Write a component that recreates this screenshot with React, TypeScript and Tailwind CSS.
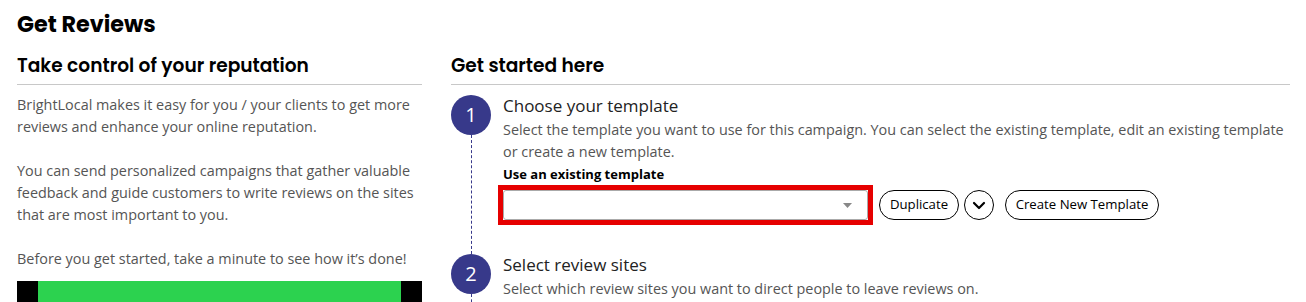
import React from "react";

const heading = "font-['Poppins','Inter',sans-serif]";
const body = "font-['Open_Sans',sans-serif]";

const Step = ({
  num,
  title,
  desc,
  children,
}: {
  num: number;
  title: string;
  desc: React.ReactNode;
  children?: React.ReactNode;
}) => (
  <div className="flex gap-3">
    <div className="flex w-10 shrink-0 flex-col items-center">
      <div className="flex h-10 w-10 items-center justify-center rounded-full bg-[#37398a] text-[20px] text-white">
        {num}
      </div>
      <div className="w-0 flex-1 border-l border-dashed border-[#37398a]" />
    </div>
    <div className="flex-1 pb-[29px]">
      <div className="text-[17px] leading-[22px] text-[#222]">{title}</div>
      <div className="mt-0.5 text-[14.4px] leading-[22px] text-[#555]">{desc}</div>
      {children}
    </div>
  </div>
);

export default function App() {
  return (
    <div className={`${body} h-[302px] overflow-hidden bg-white pl-[17px] pr-[16px] pt-[11px]`}>
      <h1 className={`${heading} text-[22.3px] font-bold leading-[28px] text-black`}>Get Reviews</h1>
      <div className="mt-[15px] flex gap-[29px]">
        <div className="w-[405px] shrink-0">
          <h2 className={`${heading} border-b border-[#c8c8c8] pb-[6px] text-[18.6px] font-semibold leading-[24px] text-black`}>
            Take control of your reputation
          </h2>
          <div className="mt-[9px] text-[14.4px] leading-[22px] text-[#555]">
            <p>BrightLocal makes it easy for you / your clients to get more reviews and enhance your online reputation.</p>
            <p className="mt-[22px]">
              You can send personalized campaigns that gather valuable feedback and guide customers to write reviews on the sites that are most important to you.
            </p>
            <p className="mt-[22px]">Before you get started, take a minute to see how it’s done!</p>
          </div>
          <div className="mt-[11px] flex h-[200px] bg-black px-[21px]">
            <div className="flex-1 bg-[#2cd24f]" />
          </div>
        </div>
        <div className="flex-1">
          <h2 className={`${heading} border-b border-[#c8c8c8] pb-[6px] text-[18.6px] font-semibold leading-[24px] text-black`}>
            Get started here
          </h2>
          <div className="mt-[10px]">
            <Step
              num={1}
              title="Choose your template"
              desc="Select the template you want to use for this campaign. You can select the existing template, edit an existing template or create a new template."
            >
              <div className="mt-[2px] text-[13px] font-bold leading-[18px] text-black">Use an existing template</div>
              <div className="-ml-[5px] mt-[2px] flex items-center">
                <div className="border-[5px] border-[#e60000]">
                  <div className="flex h-[30px] w-[365px] items-center justify-end rounded-[3px] border border-[#aaa] bg-white pr-[15px]">
                    <svg width="9" height="5" viewBox="0 0 9 5">
                      <path d="M0 0h9L4.5 5z" fill="#888" />
                    </svg>
                  </div>
                </div>
                <button className="ml-[6px] h-[30px] w-[80px] rounded-full border border-black text-[13.2px] text-black">
                  Duplicate
                </button>
                <button className="ml-[5px] flex h-[30px] w-[30px] items-center justify-center rounded-full border border-black">
                  <svg width="14" height="9" viewBox="0 0 14 9">
                    <path d="M2 2l5 5 5-5" fill="none" stroke="#000" strokeWidth="2.2" strokeLinecap="round" strokeLinejoin="round" />
                  </svg>
                </button>
                <button className="ml-[11px] h-[30px] w-[154px] rounded-full border border-black text-[13.2px] text-black">
                  Create New Template
                </button>
              </div>
            </Step>
            <Step
              num={2}
              title="Select review sites"
              desc="Select which review sites you want to direct people to leave reviews on."
            />
          </div>
        </div>
      </div>
    </div>
  );
}
